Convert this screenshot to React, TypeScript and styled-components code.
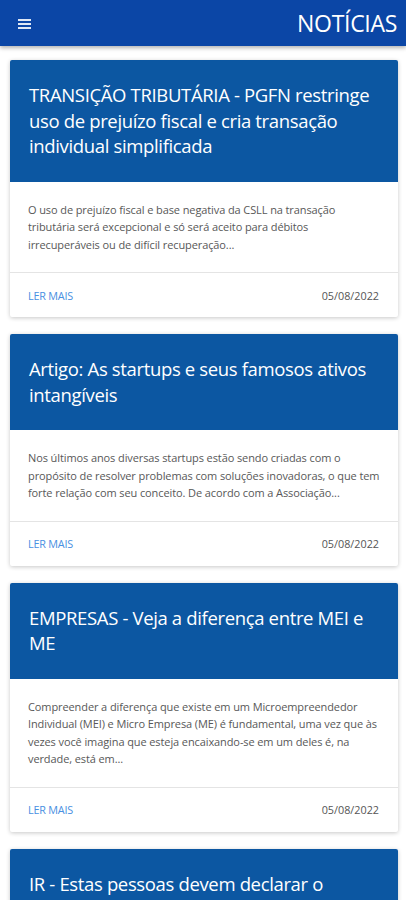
import React from "react";
import styled, { createGlobalStyle } from "styled-components";

const Global = createGlobalStyle`
  html, body { margin: 0; padding: 0; background: #ffffff; }
  body { font-family: "Open Sans", "Noto Sans", sans-serif; }
  * { box-sizing: border-box; }
`;

const Page = styled.div`
  width: 406px;
  height: 900px;
  overflow: hidden;
  background: #ffffff;
`;

const TopBar = styled.header`
  height: 46px;
  background: #0b46a6;
  display: flex;
  align-items: center;
  justify-content: space-between;
  padding: 0 9px 0 18px;
  box-shadow: 0 2px 4px rgba(0, 0, 0, 0.3);
  position: relative;
  z-index: 1;
`;

const MenuButton = styled.div`
  display: flex;
  flex-direction: column;
  gap: 2px;
  width: 13px;
  margin-top: 1px;
`;

const MenuLine = styled.span`
  display: block;
  height: 2px;
  background: #dfe8f5;
`;

const TopTitle = styled.h1`
  margin: 0;
  color: #ffffff;
  font-size: 23px;
  font-weight: 400;
  letter-spacing: -0.3px;
`;

const List = styled.main`
  display: flex;
  flex-direction: column;
  gap: 17px;
  padding: 14px 8px 0 10px;
`;

const Card = styled.article`
  background: #ffffff;
  border-radius: 2px;
  box-shadow: 0 1px 4px rgba(0, 0, 0, 0.22);
  overflow: hidden;
`;

const CardHeader = styled.div`
  background: #0c57a2;
  padding: 22px 18px 23px 19px;
`;

const CardTitle = styled.h2`
  margin: 0;
  color: #ffffff;
  font-size: 18.5px;
  line-height: 25.5px;
  font-weight: 400;
  letter-spacing: -0.35px;
`;

const CardBody = styled.p`
  margin: 0;
  padding: 19px 10px 19px 18px;
  color: #585858;
  font-size: 11px;
  line-height: 17.5px;
  letter-spacing: -0.1px;
  border-bottom: 1px solid #e4e4e4;
`;

const BodyLine = styled.span`
  display: block;
  white-space: nowrap;
`;

const CardFooter = styled.div`
  height: 44px;
  display: flex;
  align-items: center;
  justify-content: space-between;
  padding: 0 19px 0 18px;
  font-size: 10.8px;
`;

const ReadMore = styled.a`
  color: #4a90e2;
  text-decoration: none;
  letter-spacing: -0.2px;
`;

const DateText = styled.span`
  color: #555555;
`;

type News = { title: string; body: string[]; date: string };

const news: News[] = [
  {
    title:
      "TRANSIÇÃO TRIBUTÁRIA - PGFN restringe uso de prejuízo fiscal e cria transação individual simplificada",
    body: [
      "O uso de prejuízo fiscal e base negativa da CSLL na transação",
      "tributária será excepcional e só será aceito para débitos",
      "irrecuperáveis ou de difícil recuperação...",
    ],
    date: "05/08/2022",
  },
  {
    title: "Artigo: As startups e seus famosos ativos intangíveis",
    body: [
      "Nos últimos anos diversas startups estão sendo criadas com o",
      "propósito de resolver problemas com soluções inovadoras, o que tem",
      "forte relação com seu conceito. De acordo com a Associação...",
    ],
    date: "05/08/2022",
  },
  {
    title: "EMPRESAS - Veja a diferença entre MEI e ME",
    body: [
      "Compreender a diferença que existe em um Microempreendedor",
      "Individual (MEI) e Micro Empresa (ME) é fundamental, uma vez que às",
      "vezes você imagina que esteja encaixando-se em um deles é, na",
      "verdade, está em...",
    ],
    date: "05/08/2022",
  },
  {
    title: "IR - Estas pessoas devem declarar o imposto de renda em 2022",
    body: [
      "Saiba quem são as pessoas obrigadas a declarar o imposto de renda",
      "neste ano e quais os prazos...",
    ],
    date: "05/08/2022",
  },
];

export default function App() {
  return (
    <Page>
      <Global />
      <TopBar>
        <MenuButton>
          <MenuLine />
          <MenuLine />
          <MenuLine />
        </MenuButton>
        <TopTitle>NOTÍCIAS</TopTitle>
      </TopBar>
      <List>
        {news.map((n, i) => (
          <Card key={i}>
            <CardHeader>
              <CardTitle>{n.title}</CardTitle>
            </CardHeader>
            <CardBody>
              {n.body.map((line, j) => (
                <BodyLine key={j}>{line}</BodyLine>
              ))}
            </CardBody>
            <CardFooter>
              <ReadMore href="#">LER MAIS</ReadMore>
              <DateText>{n.date}</DateText>
            </CardFooter>
          </Card>
        ))}
      </List>
    </Page>
  );
}
